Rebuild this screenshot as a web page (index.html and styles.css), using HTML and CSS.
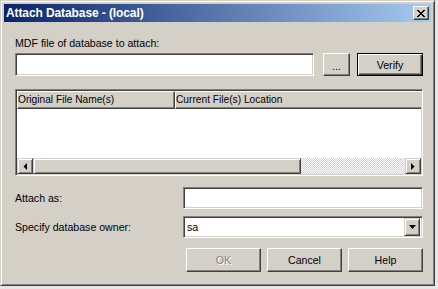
FILE: index.html
```html
<!DOCTYPE html>
<html lang="en">
<head>
    <meta charset="UTF-8">
    <title>Attach Database - (local)</title>
    <link rel="stylesheet" href="styles.css">
</head>
<body>
    <div class="window">
        <div class="titlebar">
            <span class="title">Attach Database - (local)</span>
            <span class="close-btn">
                <svg width="8" height="7" viewBox="0 0 8 7">
                    <path d="M0 0h2v1h1v1h2v-1h1v-1h2v1h-1v1h-1v1h-1v1h1v1h1v1h1v1h-2v-1h-1v-1h-2v1h-1v1h-2v-1h1v-1h1v-1h1v-1h-1v-1h-1v-1h-1z" fill="#000"/>
                </svg>
            </span>
        </div>

        <div class="content">
            <div class="label mdf-label">MDF file of database to attach:</div>
            <div class="file-row">
                <div class="field file-field"></div>
                <div class="btn browse-btn">...</div>
                <div class="btn default-btn verify-btn">Verify</div>
            </div>

            <div class="listview">
                <div class="list-header">
                    <div class="col col-name">Original File Name(s)</div>
                    <div class="col col-loc">Current File(s) Location</div>
                </div>
                <div class="list-body"></div>
                <div class="hscroll">
                    <div class="scroll-btn">
                        <svg width="4" height="7" viewBox="0 0 4 7"><path d="M4 0v7L0.5 3.5z" fill="#000"/></svg>
                    </div>
                    <div class="scroll-thumb"></div>
                    <div class="scroll-track"></div>
                    <div class="scroll-btn">
                        <svg width="4" height="7" viewBox="0 0 4 7"><path d="M0 0v7L3.5 3.5z" fill="#000"/></svg>
                    </div>
                </div>
            </div>

            <div class="form-row attach-row">
                <div class="label row-label">Attach as:</div>
                <div class="field row-field"></div>
            </div>
            <div class="form-row owner-row">
                <div class="label row-label">Specify database owner:</div>
                <div class="field row-field combo">
                    <span class="combo-text">sa</span>
                    <span class="combo-btn">
                        <svg width="7" height="4" viewBox="0 0 7 4"><path d="M0 0h7L3.5 4z" fill="#000"/></svg>
                    </span>
                </div>
            </div>

            <div class="button-row">
                <div class="btn dlg-btn disabled">OK</div>
                <div class="btn dlg-btn">Cancel</div>
                <div class="btn dlg-btn">Help</div>
            </div>
        </div>
    </div>
</body>
</html>
```

FILE: styles.css
```css
body {
    margin: 0;
    background-color: #e6e6e6;
    font-family: "Liberation Sans", Arial, sans-serif;
    font-size: 10.6px;
    color: #000;
}
.window {
    width: 435px;
    height: 286px;
    box-sizing: border-box;
    background: #d4d0c8;
    border: 1px solid;
    border-color: #d4d0c8 #404040 #404040 #d4d0c8;
    box-shadow: inset 1px 1px #fff, inset -1px -1px #808080;
    padding: 3px;
}
.titlebar {
    height: 18px;
    background: linear-gradient(to right, #0a246a, #a6caf0);
    display: flex;
    align-items: center;
    justify-content: space-between;
    padding: 0 2px 0 2px;
}
.title {
    color: #fff;
    font-weight: bold;
    font-size: 12px;
    letter-spacing: -0.1px;
}
.close-btn {
    width: 16px;
    height: 14px;
    box-sizing: border-box;
    background: #d4d0c8;
    border: 1px solid;
    border-color: #fff #404040 #404040 #fff;
    box-shadow: inset -1px -1px #808080;
    display: flex;
    align-items: center;
    justify-content: center;
    padding-right: 1px;
}
.content {
    padding: 0 8px 0 11px;
}
.label {
    line-height: 13px;
}
.mdf-label {
    margin-top: 15px;
}
.file-row {
    display: flex;
    margin-top: 3px;
    height: 23px;
}
.field {
    box-sizing: border-box;
    background: #fff;
    border: 1px solid;
    border-color: #808080 #fff #fff #808080;
    box-shadow: inset 1px 1px #404040, inset -1px -1px #d4d0c8;
}
.file-field {
    width: 299px;
}
.btn {
    box-sizing: border-box;
    background: #d4d0c8;
    border: 1px solid;
    border-color: #fff #404040 #404040 #fff;
    box-shadow: inset -1px -1px #808080;
    display: flex;
    align-items: center;
    justify-content: center;
}
.browse-btn {
    width: 27px;
    margin-left: 9px;
    padding-top: 2px;
}
.default-btn {
    border-color: #000;
    box-shadow: inset 1px 1px #fff, inset -1px -1px #404040, inset -2px -2px #808080;
}
.verify-btn {
    width: 66px;
    margin-left: 7px;
}
.listview {
    margin-top: 13px;
    height: 87px;
    box-sizing: border-box;
    border: 1px solid;
    border-color: #808080 #fff #fff #808080;
    box-shadow: inset 1px 1px #404040, inset -1px -1px #d4d0c8;
    padding: 1px;
    background: #fff;
    display: flex;
    flex-direction: column;
}
.list-header {
    display: flex;
    height: 18px;
    background: #d4d0c8;
    font-size: 10.2px;
}
.col {
    box-sizing: border-box;
    border: 1px solid;
    border-color: #fff #404040 #404040 #fff;
    box-shadow: inset -1px -1px #808080;
    padding: 0 1px 0 0;
    line-height: 15px;
}
.col-name {
    width: 158px;
}
.col-loc {
    flex: 1;
    border-right: none;
    box-shadow: inset 0 -1px #808080;
}
.list-body {
    flex: 1;
}
.hscroll {
    display: flex;
    height: 16px;
}
.scroll-btn {
    width: 16px;
    box-sizing: border-box;
    background: #d4d0c8;
    border: 1px solid;
    border-color: #d4d0c8 #404040 #404040 #d4d0c8;
    box-shadow: inset 1px 1px #fff, inset -1px -1px #808080;
    display: flex;
    align-items: center;
    justify-content: center;
}
.scroll-thumb {
    width: 268px;
    box-sizing: border-box;
    background: #d4d0c8;
    border: 1px solid;
    border-color: #d4d0c8 #404040 #404040 #d4d0c8;
    box-shadow: inset 1px 1px #fff, inset -1px -1px #808080;
}
.scroll-track {
    flex: 1;
    background: repeating-conic-gradient(#fff 0 25%, #d4d0c8 0 50%) 0 0 / 2px 2px;
}
.form-row {
    display: flex;
    align-items: center;
    height: 22px;
}
.attach-row {
    margin-top: 11px;
}
.owner-row {
    margin-top: 7px;
}
.row-label {
    width: 168px;
}
.row-field {
    flex: 1;
    height: 22px;
}
.combo {
    display: flex;
    align-items: center;
    justify-content: space-between;
    padding: 2px;
}
.combo-text {
    padding-left: 1px;
}
.combo-btn {
    width: 16px;
    height: 18px;
    box-sizing: border-box;
    background: #d4d0c8;
    border: 1px solid;
    border-color: #d4d0c8 #404040 #404040 #d4d0c8;
    box-shadow: inset 1px 1px #fff, inset -1px -1px #808080;
    display: flex;
    align-items: center;
    justify-content: center;
}
.button-row {
    display: flex;
    justify-content: flex-end;
    gap: 6px;
    margin-top: 10px;
}
.dlg-btn {
    width: 75px;
    height: 24px;
}
.disabled {
    color: #808080;
    text-shadow: 1px 1px #fff;
}
```
